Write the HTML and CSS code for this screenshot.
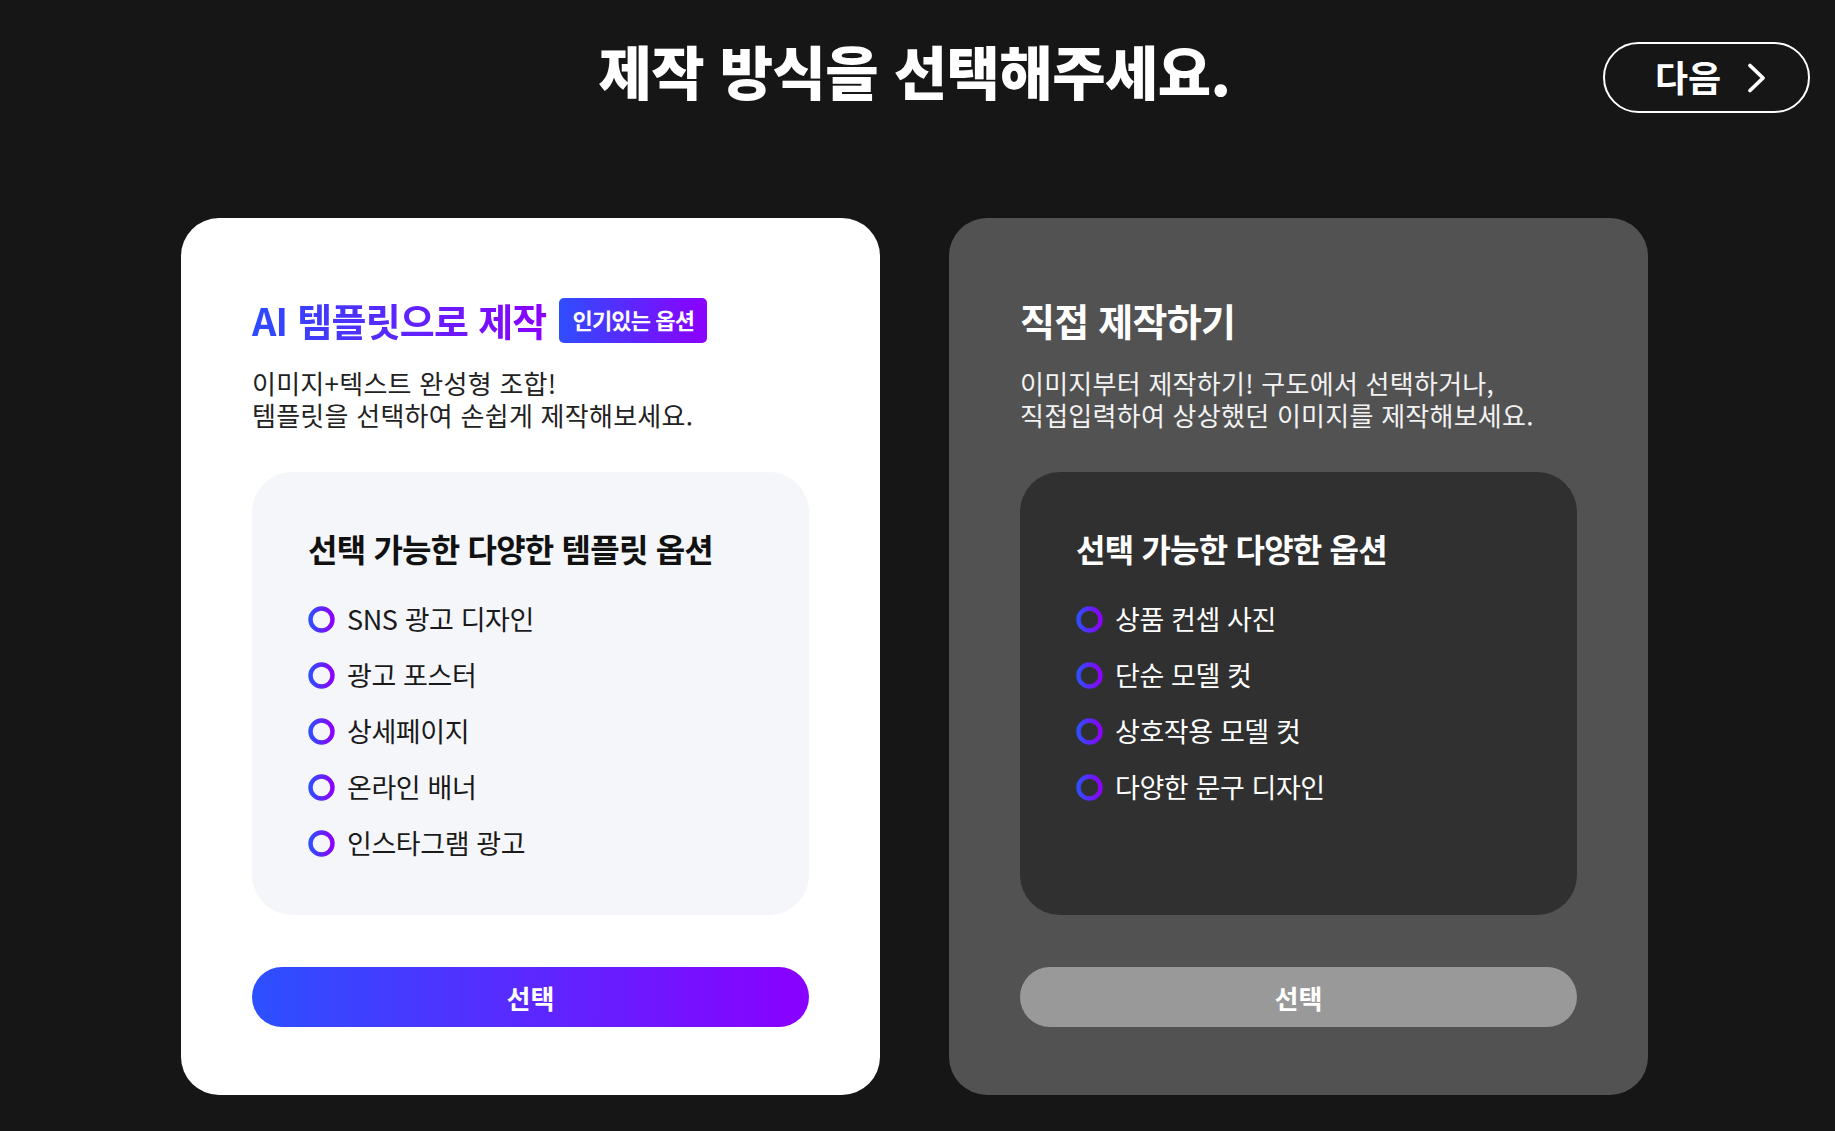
FILE: index.html
```html
<!DOCTYPE html>
<html lang="ko">
<head>
<meta charset="utf-8">
<title>제작 방식 선택</title>
<link rel="stylesheet" href="styles.css">
</head>
<body>
<svg class="defs" width="0" height="0" aria-hidden="true">
  <defs>
    <linearGradient id="ring" x1="0" y1="0" x2="1" y2="0">
      <stop offset="0" stop-color="#2f4dff"/>
      <stop offset="1" stop-color="#8c00ff"/>
    </linearGradient>
  </defs>
</svg>
<header class="header">
  <div class="header-side"></div>
  <h1 class="page-title">제작 방식을 선택해주세요.</h1>
  <div class="header-side header-right">
    <button class="next-btn" type="button">
      <span>다음</span>
      <svg class="chev" width="21" height="32" viewBox="0 0 21 32"><path d="M4 3.5 L17 16 L4 28.5" fill="none" stroke="#fff" stroke-width="3.8" stroke-linecap="round" stroke-linejoin="round"/></svg>
    </button>
  </div>
</header>

<main class="cards">
  <section class="card card-light">
    <div class="card-title-row">
      <h2 class="card-title grad-text">AI 템플릿으로 제작</h2>
      <span class="badge">인기있는 옵션</span>
    </div>
    <p class="card-desc">이미지+텍스트 완성형 조합!<br>템플릿을 선택하여 손쉽게 제작해보세요.</p>
    <div class="options options-light">
      <h3 class="options-title">선택 가능한 다양한 템플릿 옵션</h3>
      <ul class="option-list">
        <li><svg class="ring" width="27" height="27" viewBox="0 0 27 27"><circle cx="13.5" cy="13.5" r="11" fill="none" stroke="url(#ring)" stroke-width="4.4"/></svg>SNS 광고 디자인</li>
        <li><svg class="ring" width="27" height="27" viewBox="0 0 27 27"><circle cx="13.5" cy="13.5" r="11" fill="none" stroke="url(#ring)" stroke-width="4.4"/></svg>광고 포스터</li>
        <li><svg class="ring" width="27" height="27" viewBox="0 0 27 27"><circle cx="13.5" cy="13.5" r="11" fill="none" stroke="url(#ring)" stroke-width="4.4"/></svg>상세페이지</li>
        <li><svg class="ring" width="27" height="27" viewBox="0 0 27 27"><circle cx="13.5" cy="13.5" r="11" fill="none" stroke="url(#ring)" stroke-width="4.4"/></svg>온라인 배너</li>
        <li><svg class="ring" width="27" height="27" viewBox="0 0 27 27"><circle cx="13.5" cy="13.5" r="11" fill="none" stroke="url(#ring)" stroke-width="4.4"/></svg>인스타그램 광고</li>
      </ul>
    </div>
    <button class="select-btn select-primary" type="button">선택</button>
  </section>

  <section class="card card-dark">
    <div class="card-title-row">
      <h2 class="card-title">직접 제작하기</h2>
    </div>
    <p class="card-desc">이미지부터 제작하기! 구도에서 선택하거나,<br>직접입력하여 상상했던 이미지를 제작해보세요.</p>
    <div class="options options-dark">
      <h3 class="options-title">선택 가능한 다양한 옵션</h3>
      <ul class="option-list">
        <li><svg class="ring" width="27" height="27" viewBox="0 0 27 27"><circle cx="13.5" cy="13.5" r="11" fill="none" stroke="url(#ring)" stroke-width="4.4"/></svg>상품 컨셉 사진</li>
        <li><svg class="ring" width="27" height="27" viewBox="0 0 27 27"><circle cx="13.5" cy="13.5" r="11" fill="none" stroke="url(#ring)" stroke-width="4.4"/></svg>단순 모델 컷</li>
        <li><svg class="ring" width="27" height="27" viewBox="0 0 27 27"><circle cx="13.5" cy="13.5" r="11" fill="none" stroke="url(#ring)" stroke-width="4.4"/></svg>상호작용 모델 컷</li>
        <li><svg class="ring" width="27" height="27" viewBox="0 0 27 27"><circle cx="13.5" cy="13.5" r="11" fill="none" stroke="url(#ring)" stroke-width="4.4"/></svg>다양한 문구 디자인</li>
      </ul>
    </div>
    <button class="select-btn select-muted" type="button">선택</button>
  </section>
</main>
</body>
</html>
```

FILE: styles.css
```css
* { box-sizing: border-box; }

html, body {
  margin: 0;
  padding: 0;
  background: #161616;
}

body {
  font-family: "Noto Sans CJK KR", "Noto Sans", sans-serif;
  color: #fff;
  min-height: 1131px;
}

.defs {
  position: absolute;
  width: 0;
  height: 0;
  overflow: hidden;
}

.header {
  display: grid;
  grid-template-columns: 1fr auto 1fr;
  align-items: start;
  padding: 35px 25px 0 19px;
}

.page-title {
  margin: 0;
  font-size: 58px;
  font-weight: 900;
  letter-spacing: -0.01em;
  line-height: 70px;
  color: #fff;
  text-align: center;
}

.header-right {
  display: flex;
  justify-content: flex-end;
  padding-top: 7px;
}

.next-btn {
  display: flex;
  align-items: center;
  gap: 25px;
  width: 207px;
  height: 71px;
  padding: 0 0 3px 50px;
  border: 2px solid #fff;
  border-radius: 36px;
  background: transparent;
  color: #fff;
  font-family: inherit;
  font-size: 36px;
  font-weight: 700;
  letter-spacing: 0;
  line-height: 1;
  cursor: pointer;
}

.chev { display: block; flex: none; margin-top: 3px; }

.cards {
  display: grid;
  grid-template-columns: 699px 699px;
  justify-content: center;
  column-gap: 69px;
  margin-top: 105px;
  padding-right: 6px;
}

.card {
  display: flex;
  flex-direction: column;
  border-radius: 38px;
  padding: 81px 71px 68px;
}

.card-light { background: #ffffff; color: #111; }
.card-dark { background: #525252; color: #fff; }

.card-title-row {
  display: flex;
  align-items: center;
  gap: 12px;
  height: 44px;
}

.card-title {
  margin: 0;
  font-size: 38px;
  font-weight: 700;
  letter-spacing: -0.02em;
  line-height: 44px;
  position: relative;
  top: -1px;
}

.grad-text {
  background: linear-gradient(90deg, #2c4bff 0%, #8c00ff 100%);
  -webkit-background-clip: text;
  background-clip: text;
  color: transparent;
}

.badge {
  display: inline-flex;
  align-items: center;
  height: 45px;
  padding: 0 13px 2px 14px;
  border-radius: 5px;
  background: linear-gradient(90deg, #2f4dff 0%, #8c00ff 100%);
  color: #fff;
  font-size: 22px;
  font-weight: 700;
  letter-spacing: -0.04em;
  line-height: 1;
  margin-top: -2px;
}

.card-desc {
  margin: 24px 0 0 0;
  font-size: 26px;
  font-weight: 400;
  letter-spacing: 0.01em;
  line-height: 32px;
}

.card-light .card-desc { color: #222; }
.card-dark .card-desc { color: #f2f2f2; }

.options {
  flex: 1;
  margin-top: 41px;
  border-radius: 40px;
  padding: 56px 56px 55px;
}

.options-light { background: #f5f6fa; }
.options-dark { background: #303030; }

.options-title {
  margin: 0;
  font-size: 32px;
  font-weight: 700;
  letter-spacing: -0.025em;
  line-height: 40px;
}

.options-light .options-title { color: #111; }
.options-dark .options-title { color: #fff; }

.option-list {
  list-style: none;
  margin: 34px 0 0 0;
  padding: 0;
  display: flex;
  flex-direction: column;
  gap: 22px;
}

.option-list li {
  display: flex;
  align-items: center;
  gap: 12px;
  font-size: 27px;
  font-weight: 400;
  letter-spacing: -0.015em;
  line-height: 34px;
}

.options-light .option-list li { color: #1a1a1a; }
.options-dark .option-list li { color: #fff; }

.ring { display: block; flex: none; }

.select-btn {
  display: block;
  width: 100%;
  height: 60px;
  margin-top: 52px;
  border: 0;
  border-radius: 30px;
  color: #fff;
  font-family: inherit;
  font-size: 26px;
  font-weight: 700;
  letter-spacing: 0;
  cursor: pointer;
}

.select-primary { background: linear-gradient(90deg, #2c50ff 0%, #8a00ff 100%); }
.select-muted { background: #999999; }
```
